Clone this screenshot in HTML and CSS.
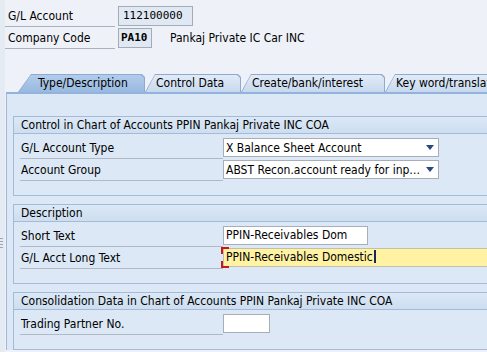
FILE: index.html
```html
<!DOCTYPE html>
<html>
<head>
<meta charset="utf-8">
<link rel="stylesheet" href="styles.css">
</head>
<body>
<div class="grip"></div>
<div class="header">
  <div class="hrow"><span class="hlabel">G/L Account</span><span class="ro ro-acct">112100000</span></div>
  <div class="hrow"><span class="hlabel">Company Code</span><span class="ro ro-cc">PA10</span><span class="hdesc">Pankaj Private IC Car INC</span></div>
</div>
<div class="tabs">
  <div class="tab active w1"><div class="tab-in">Type/Description</div></div>
  <div class="tab w2"><div class="tab-in">Control Data</div></div>
  <div class="tab w3"><div class="tab-in">Create/bank/interest</div></div>
  <div class="tab w4"><div class="tab-in">Key word/translation</div></div>
</div>
<div class="panel">
  <div class="group">
    <div class="ghead">Control in Chart of Accounts PPIN Pankaj Private INC COA</div>
    <div class="gbody">
      <div class="row"><span class="label">G/L Account Type</span><span class="select"><span class="stext">X Balance Sheet Account</span><span class="arrow"></span></span></div>
      <div class="row"><span class="label">Account Group</span><span class="select"><span class="stext">ABST Recon.account ready for inp…</span><span class="arrow"></span></span></div>
    </div>
  </div>
  <div class="group">
    <div class="ghead">Description</div>
    <div class="gbody">
      <div class="row"><span class="label">Short Text</span><span class="input w-short">PPIN-Receivables Dom</span></div>
      <div class="row"><span class="label">G/L Acct Long Text</span><span class="input w-long req">PPIN-Receivables Domestic<span class="caret"></span></span></div>
    </div>
  </div>
  <div class="group">
    <div class="ghead">Consolidation Data in Chart of Accounts PPIN Pankaj Private INC COA</div>
    <div class="gbody">
      <div class="row"><span class="label">Trading Partner No.</span><span class="input w-tp"></span></div>
    </div>
  </div>
</div>
</body>
</html>
```
FILE: styles.css
```css
* { box-sizing: border-box; }
html, body { margin: 0; padding: 0; }
body {
  width: 487px;
  height: 352px;
  overflow: hidden;
  position: relative;
  background: linear-gradient(to right, #e5ebf2 0, #e5ebf2 5px, #eef2f8 5px);
  font-family: "DejaVu Sans Condensed", "DejaVu Sans", sans-serif;
  font-stretch: condensed;
  font-size: 12px;
  color: #000;
}
.grip {
  position: absolute;
  left: 0;
  top: 238px;
  width: 3px;
  height: 12px;
  background: repeating-linear-gradient(#9aa6b4 0, #9aa6b4 1px, transparent 1px, transparent 3px);
}
.header {
  padding: 6px 0 0 5px;
  display: flex;
  flex-direction: column;
  gap: 1px;
}
.hrow { display: flex; align-items: flex-start; height: 21px; }
.hlabel {
  width: 110px;
  height: 21px;
  border-bottom: 1px solid #a9b1bb;
  padding-left: 3px;
  line-height: 20px;
  margin-right: 3px;
}
.ro {
  height: 20px;
  border: 1px solid #a3abb5;
  background: #dfe8f3;
  font-family: "DejaVu Sans Mono", "Liberation Mono", monospace;
  font-stretch: normal;
  font-size: 11px;
  line-height: 18px;
  padding-left: 4px;
}
.ro-acct { width: 75px; }
.ro-cc { width: 34px; padding-left: 2px; font-weight: bold; }
.hdesc { margin-left: 18px; line-height: 20px; }

.tabs {
  margin-top: 25px;
  padding-left: 18px;
  display: flex;
  height: 18px;
  overflow: hidden;
}
.tab {
  flex: none;
  height: 18px;
  background: #8eaad0;
  clip-path: polygon(0 100%, 10px 0, calc(100% - 3px) 0, 100% 3px, 100% 100%);
  padding: 1px 1px 0 1px;
}
.tab-in {
  height: 17px;
  background: linear-gradient(#e2ebf7, #c7d9ee);
  clip-path: polygon(0 100%, 9px 0, calc(100% - 3px) 0, 100% 3px, 100% 100%);
  padding-left: 10px;
  line-height: 17px;
  white-space: nowrap;
  overflow: hidden;
}
.tab.active {
  clip-path: polygon(0 100%, 13px 0, calc(100% - 3px) 0, 100% 3px, 100% 100%);
}
.tab.active .tab-in {
  background: linear-gradient(#b2cceb, #99b9e0);
  clip-path: polygon(0 100%, 12px 0, calc(100% - 3px) 0, 100% 3px, 100% 100%);
  padding-left: 19px;
}
.w1 { width: 127px; }
.w2 { width: 96px; }
.w3 { width: 144px; }
.w4 { width: 130px; }

.panel {
  margin-left: 6px;
  border-left: 1px solid #a0b8d6;
  border-top: 2px solid #92b3dc;
  background: #dce8f5;
  padding: 22px 0 0 6px;
  height: 258px;
}
.group {
  border: 1px solid #a3bbd9;
  border-right: none;
  margin-bottom: 8px;
}
.ghead {
  height: 17px;
  border-bottom: 1px solid #a3bbd9;
  background: linear-gradient(#dce8f5, #cddef0);
  padding-left: 7px;
  line-height: 16px;
  white-space: nowrap;
}
.gbody {
  padding: 4px 0 14px 6px;
  display: flex;
  flex-direction: column;
  gap: 1px;
}
.row { display: flex; align-items: flex-start; height: 21px; }
.label {
  flex: none;
  width: 203px;
  height: 21px;
  border-bottom: 1px solid #b0b9c4;
  padding-left: 1px;
  line-height: 20px;
}
.select {
  flex: none;
  width: 216px;
  height: 19px;
  background: #fff;
  border: 1px solid #a7aeb8;
  display: flex;
  align-items: center;
  padding-left: 2px;
}
.stext { white-space: nowrap; overflow: hidden; }
.arrow {
  margin-left: auto;
  margin-right: 4px;
  width: 0;
  height: 0;
  border-left: 4px solid transparent;
  border-right: 4px solid transparent;
  border-top: 5px solid #28497c;
  flex: none;
}
.input {
  flex: none;
  height: 19px;
  background: #fff;
  border: 1px solid #a7aeb8;
  padding-left: 2px;
  line-height: 17px;
  white-space: nowrap;
}
.w-short { width: 145px; }
.w-long { width: 280px; background: #fff3a3; border-color: #c2c0a8; }
.w-tp { width: 47px; }
.req { position: relative; }
.req::before, .req::after {
  content: "";
  position: absolute;
  left: -3px;
  width: 6px;
  height: 5px;
  border-left: 2px solid #c41a1a;
}
.req::before { top: -2px; border-top: 2px solid #c41a1a; }
.req::after { bottom: -2px; border-bottom: 2px solid #c41a1a; }
.caret {
  display: inline-block;
  width: 2px;
  height: 13px;
  background: #17275c;
  vertical-align: -2px;
  margin-left: 1px;
}
```
